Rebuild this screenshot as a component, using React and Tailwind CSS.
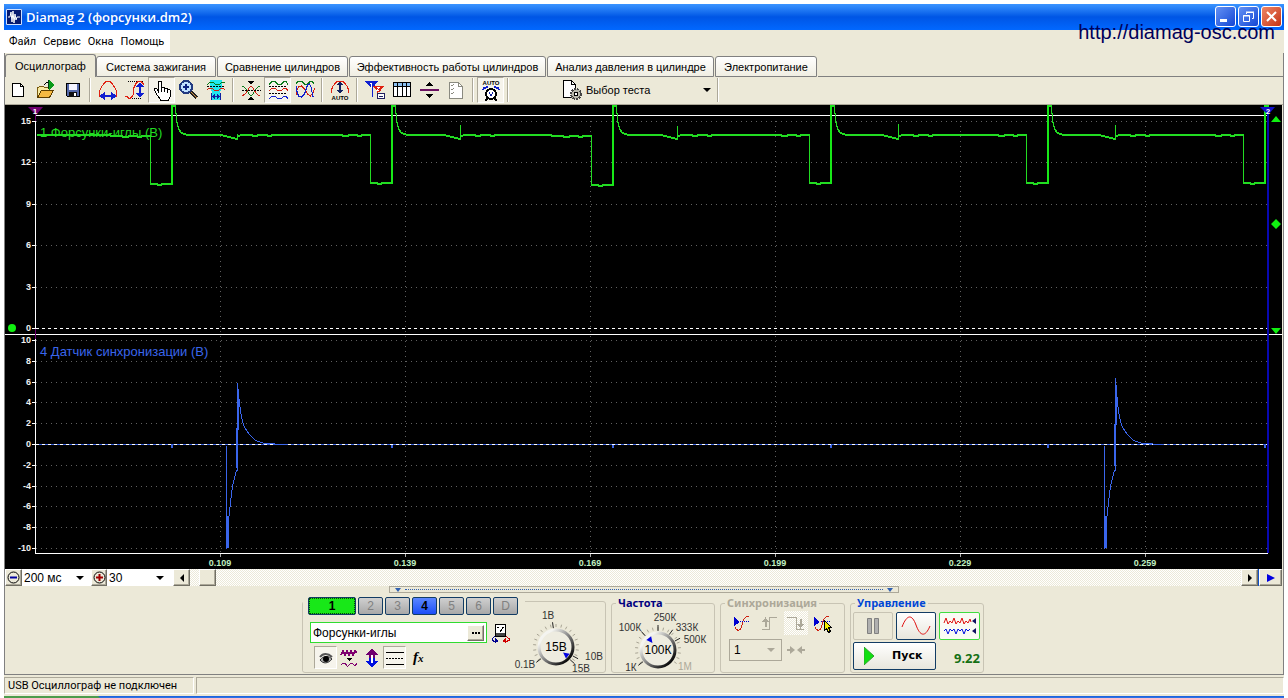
import React, { useState } from 'react';

const TABS = [
  { label: 'Осциллограф', width: 'w-[91px]' },
  { label: 'Система зажигания', width: 'w-[120px]' },
  { label: 'Сравнение цилиндров', width: 'w-[131px]' },
  { label: 'Эффективность работы цилиндров', width: 'w-[197px]' },
  { label: 'Анализ давления в цилиндре', width: 'w-[167px]' },
  { label: 'Электропитание', width: 'w-[102px]' },
];

const MENU = ['Файл', 'Сервис', 'Окна', 'Помощь'];

const CHANNELS = ['2', '3', '4', '5', '6', 'D'];

const PRESSED = 'border border-[#aca899] border-r-white border-b-white bg-[#f6f4ec]';
const RAISED = 'border border-white border-r-[#716f64] border-b-[#716f64] bg-[#ece9d8] shadow-[inset_-1px_-1px_0_#aca899]';
const TRACK = 'bg-[repeating-conic-gradient(#ffffff_0_25%,#ece9d8_0_50%)] bg-[length:2px_2px]';

const Icon = ({ children, size = 24 }) => (
  <svg width={size} height={size} viewBox={`0 0 ${size} ${size}`} fill="none" stroke="#000" strokeWidth="1" shapeRendering="crispEdges" className="shrink-0" aria-hidden="true">
    {children}
  </svg>
);

const Tri = ({ d, fill = '#000' }) => <path d={d} fill={fill} stroke="none" />;

const ICONS = {
  create: (
    <Icon>
      <path d="M5.500 5.500h8l3 3v10h-11z" fill="#fff" />
      <path d="M13.500 5.500v3h3" />
    </Icon>
  ),
  open: (
    <Icon>
      <path d="M3.500 19.500v-10h1l1-1h4l1 1h5v3" fill="#f7e9a0" stroke="#7a5a10" />
      <path d="M3.500 19.500l4-7h12l-4 7z" fill="#f5b942" stroke="#5a3c00" />
      <path d="M10.500 7.500c1-3 2-3 4-3" />
      <Tri d="M15 2l6 5-6 5z" fill="#0a9a1a" />
      <path d="M14.500 2v9" stroke="#003a10" />
    </Icon>
  ),
  save: (
    <Icon>
      <path d="M5.500 5.500h13v13h-12l-1-1z" fill="#5468a8" />
      <path d="M8 6h8v6H8z" fill="#f4f4ff" stroke="none" />
      <path d="M8 14h8v5H8z" fill="#111" stroke="none" />
      <path d="M13 15h2v3h-2z" fill="#fff" stroke="none" />
    </Icon>
  ),
  dome: (
    <Icon>
      <path d="M3.500 19v-6l2-4 3-4 2-2h3l2 2 3 4 2 4v6" stroke="#e02010" />
      <path d="M5 18h14" stroke="#1020d0" strokeWidth="2" />
      <Tri d="M9 14v8l-6-4zM15 14v8l6-4z" fill="#1020d0" />
    </Icon>
  ),
  sCurve: (
    <Icon>
      <path d="M5 3.500h15M5 20.500h13" strokeDasharray="1 1" />
      <path d="M2 18.500h2l2 2h1l3-3 1-8 2-4 2-2h3l3 3" stroke="#e02010" />
      <path d="M17 7v10" stroke="#1020d0" strokeWidth="2" />
      <Tri d="M13 9h8l-4-5zM13 15h8l-4 5z" fill="#1020d0" />
    </Icon>
  ),
  hand: (
    <Icon>
      <path d="M8.500 14.500V4.500c0-2 3-2 3 0v6c0-2 3-2 3 0v1c0-2 3-2 3 0v1c0-2 3-1 3 1v4c0 2-2 3-2 5h-8c0-2-2-3-3-5l-3-5c-1-2 2-3 3-1z" fill="#fff" />
      <path d="M11.500 10v4M14.500 11v3M17.500 12v3" />
    </Icon>
  ),
  magnifier: (
    <Icon>
      <path d="M13 13l7 7" stroke="#222" strokeWidth="4" />
      <path d="M14 14l6 6" stroke="#d09040" strokeWidth="1" />
      <circle cx="9" cy="9" r="6" fill="#bfe0ff" stroke="#223a80" strokeWidth="2" />
      <path d="M6 9h6M9 6v6" stroke="#0a2080" strokeWidth="2" />
    </Icon>
  ),
  window: (
    <Icon>
      <path d="M6 2h12v8l-2 4v8H8v-8l-2-4z" fill="#20e8f0" stroke="none" />
      <path d="M3 6.500l3-2h3l3 2h3l3-2h3" stroke="#0a7a1a" />
      <path d="M3 8.500h18" strokeDasharray="2 1" />
      <path d="M3 11.500l2-1h3l3 2h3l3-2h2l2 1" stroke="#d02010" />
      <path d="M7.500 15v7M16.500 15v7M8 18.500h8" stroke="#1020a0" />
      <Tri d="M11 16v5l-3-2.500zM13 16v5l3-2.500z" fill="#1020a0" />
    </Icon>
  ),
  cross: (
    <Icon>
      <path d="M3 8.500c5 0 6 9 9 9s4-9 9-9" stroke="#0a7a1a" />
      <path d="M3 17.500c5 0 6-9 9-9s4 9 9 9" stroke="#d02010" />
      <path d="M3 12.500h19" strokeDasharray="2 1" />
      <Tri d="M9 3h6l-3 4zM9 22h6l-3-4z" />
    </Icon>
  ),
  waves: (
    <Icon>
      <path d="M3 6.500l3-3h3l3 3h3l3-3h2l2 3" stroke="#0a7a1a" />
      <path d="M3 8.500h18M3 15.500h18" strokeDasharray="2 1" />
      <path d="M3 12.500l3-2h3l3 2h3l3-2h2l2 2" stroke="#d02010" />
      <path d="M3 20.500l3-2h3l3 2h3l3-2h2l2 2" stroke="#1020d0" />
    </Icon>
  ),
  overlap: (
    <Icon>
      <path d="M3 5.500l2-2h4l3 3h2l3-3h2l2 2" stroke="#0a7a1a" />
      <path d="M3.500 17v-4l2-4 3-1 3 3 3 5 3 2 3-4 1-4" stroke="#d02010" />
      <path d="M3.500 8v4l2 6 3 1 3-3 3-9 2-1 2 4 1 8 1 1" stroke="#1020d0" />
    </Icon>
  ),
  auto: (
    <Icon>
      <path d="M3.500 15v-3l1-3 2-3 3-3h5l3 3 2 3 1 3v3" stroke="#e02010" />
      <path d="M12 5v9" stroke="#102060" strokeWidth="2" />
      <Tri d="M9 7h6l-3-4zM9 12h6l-3 4z" fill="#102060" />
      <text x="12" y="22" textAnchor="middle" fill="#000" stroke="none" className="text-[6px] font-bold">AUTO</text>
    </Icon>
  ),
  flags: (
    <Icon>
      <Tri d="M2 3h13l-6 8z" fill="#1020d0" />
      <path d="M9.500 4v15" stroke="#1020d0" />
      <Tri d="M10 8h11l-5 7z" fill="#e02010" />
      <path d="M14.500 9v8" stroke="#e02010" />
      <path d="M7 5.500h1.500v4" stroke="#fff" />
      <path d="M14 9.500h2l-2 3h2" stroke="#fff" />
      <path d="M14.500 15.500h7v5h-7z" fill="#fff" stroke="#202060" />
      <path d="M16 18.500h4" stroke="#202060" />
    </Icon>
  ),
  table: (
    <Icon>
      <path d="M3.500 4.500h17v14h-17z" fill="#fff" />
      <path d="M4 5h16v3H4z" fill="#8cc0f0" stroke="none" />
      <path d="M3 8.500h18M7.500 5v14M12.500 5v14M16.500 5v14" />
    </Icon>
  ),
  split: (
    <Icon>
      <path d="M3 12h19" stroke="#6a1060" strokeWidth="2" />
      <Tri d="M9 8h7l-3.500-4zM9 16h7l-3.500 4z" />
    </Icon>
  ),
  checklist: (
    <Icon>
      <path d="M5.500 4.500h9l4 4v12h-13z" fill="#fff" stroke="#8a8a80" />
      <path d="M14.500 4.500v4h4" stroke="#8a8a80" />
      <path d="M7 7l1 1 2-2M7 11l1 1 2-2M7 15l1 1 2-2" stroke="#8a8a80" />
    </Icon>
  ),
  clock: (
    <Icon>
      <text x="12" y="7" textAnchor="middle" fill="#000" stroke="none" className="text-[6px] font-bold">AUTO</text>
      <circle cx="12" cy="16" r="5" fill="#fff" strokeWidth="2" />
      <path d="M10 14l2 4 2-4" stroke="#1020a0" />
      <path d="M8 21l-2 2M16 21l2 2" strokeWidth="2" />
      <path d="M4 12l1-2 4-1M20 12l-1-2-4-1" stroke="#1020d0" strokeWidth="2" />
    </Icon>
  ),
};

const TOOLBAR = [
  ['create', 'Создать'],
  ['open', 'Открыть'],
  ['save', 'Сохранить'],
  null,
  ['dome', 'Масштаб по времени'],
  ['sCurve', 'Масштаб по амплитуде'],
  ['hand', 'Перемещение', true],
  ['magnifier', 'Увеличить'],
  ['window', 'Окно'],
  null,
  ['cross', 'Центрировать'],
  ['waves', 'Раздельно', true],
  ['overlap', 'Вместе'],
  null,
  ['auto', 'Авто'],
  null,
  ['flags', 'Маркеры'],
  ['table', 'Таблица'],
  ['split', 'Разделить'],
  ['checklist', 'Отчёт'],
  null,
  ['clock', 'Авто частота', true],
  null,
];

const Separator = () => (
  <div className="flex h-6 w-2 shrink-0 justify-center">
    <div className="w-[2px] border-l border-[#aca899] bg-white" />
  </div>
);

const Arrow = ({ className = 'fill-black' }) => (
  <svg width="8" height="4" viewBox="0 0 8 4" className={`pointer-events-none -ml-3 shrink-0 ${className}`} aria-hidden="true">
    <path d="M0 0h8L4 4z" />
  </svg>
);

function TitleBar() {
  const btn = 'flex size-[21px] items-center justify-center rounded-[3px] border border-white';
  return (
    <header className="flex h-[26px] items-center bg-linear-to-b from-[#3a94ff] via-[#0055e5] to-[#0168ff] pr-[2px] pb-px pl-[2px]">
      <svg width="16" height="16" viewBox="0 0 16 16" className="shrink-0 bg-[#061a70]" aria-hidden="true">
        <path d="M0.500 0.500h15v15h-15z" fill="none" stroke="#cfe0ff" />
        <path d="M2 8h2l1-5 1 10 1-11 1 12 1-9 1 6 1-3h3" fill="none" stroke="#fff" />
      </svg>
      <h1 className="ml-1 grow whitespace-nowrap pt-[2px] font-['Open_Sans','Noto_Sans',sans-serif] text-[13px] font-semibold text-white">Diamag 2 (форсунки.dm2)</h1>
      <div className="flex gap-[2px]">
        <button aria-label="Свернуть" className={`${btn} bg-linear-to-br from-[#6490f4] to-[#1444d4]`}>
          <svg width="15" height="15"><path d="M2 10h7v3H2z" fill="#fff" /></svg>
        </button>
        <button aria-label="Восстановить" className={`${btn} bg-linear-to-br from-[#6490f4] to-[#1444d4]`}>
          <svg width="15" height="15" fill="none" stroke="#fff">
            <path d="M5.500 5V3.500h7v6H11M5 3h8" />
            <path d="M2.500 6.500h6v6h-6zM2 7h7" />
          </svg>
        </button>
        <button aria-label="Закрыть" className={`${btn} bg-linear-to-br from-[#ee8464] to-[#c43010]`}>
          <svg width="15" height="15"><path d="M3 3l9 9M12 3l-9 9" stroke="#fff" strokeWidth="2" /></svg>
        </button>
      </div>
    </header>
  );
}

function Tabs() {
  const [active, setActive] = useState(0);
  return (
    <div className="flex h-[23px] items-end" role="tablist">
      {TABS.map((tab, i) => (
        <button
          key={tab.label}
          role="tab"
          aria-selected={i === active}
          onClick={() => setActive(i)}
          className={`${tab.width} shrink-0 whitespace-nowrap rounded-t-[3px] border border-[#808080] text-center text-[11px] leading-[18px] ${
            i === active ? 'h-[23px] border-b-0 bg-[#ece9d8]' : 'mr-[1px] h-[21px] bg-linear-to-b from-white to-[#f0eee2]'
          }`}
        >
          {tab.label}
        </button>
      ))}
      <div className="h-px grow bg-[#808080]" />
    </div>
  );
}

function Toolbar() {
  return (
    <div className="flex h-[28px] items-center border-b border-[#aca899] pb-px">
      {TOOLBAR.map((item, i) => {
        if (!item) return <Separator key={i} />;
        const [key, label, pressed] = item;
        return (
          <button key={key} title={label} aria-label={label} className={`flex h-[26px] w-[27px] shrink-0 items-center justify-center ${pressed ? PRESSED : ''}`}>
            {ICONS[key]}
          </button>
        );
      })}
      <div className="ml-12 flex w-[154px] items-center pr-[3px]">
        <Icon>
          <path d="M3.500 2.500h8l4 4v13h-12z" fill="#fff" />
          <path d="M11.500 2.500v4h4" />
          <circle cx="16" cy="16" r="5" fill="#b8b8ac" stroke="#444" strokeWidth="2" strokeDasharray="2 1" />
          <circle cx="16" cy="16" r="2" fill="#fff" />
        </Icon>
        <select aria-label="Выбор теста" className="min-w-0 grow appearance-none bg-transparent pl-[2px] text-[11px]">
          <option>Выбор теста</option>
        </select>
        <Arrow />
      </div>
      <Separator />
    </div>
  );
}

// falling edge, rising edge, level before the pulse, bottom of the pulse
const PULSES = [
  [150, 172, 135, 183],
  [370, 392, 134, 182],
  [591, 613, 135, 184],
  [809, 831, 134, 182],
  [1026, 1048, 134, 182],
  [1243, 1265, 134, 182],
];

// bumps after each pulse: x and top of the spike
const BUMPS = [
  [237, 133],
  [460, 124],
  [677, 125],
  [898, 123],
  [1115, 124],
];

const injectorPath = () => {
  let d = 'M36 134 H110 V135';
  PULSES.forEach(([fall, rise, level, bottom], i) => {
    d += ` H${fall - 40} V${level} h12 v1 h6 v-1 h9 v1 h4 v-1 H${fall} V${bottom} h7 v1 h4 v-1 H${rise} V105 h3`;
    if (i < BUMPS.length) {
      const [x, top] = BUMPS[i];
      d += ` l1 14 l2 9 l3 4 l6 2 H${x - 16} L${x - 9} 136 L${x} 138 V${top} V136 L${x + 3} 134 h12 v1 h5 v-1 h10 v1 h4 v-1`;
    }
  });
  return d;
};

const syncPath = (x) => `M${x} 445 V548 L${x + 2} 520 L${x + 4} 502 L${x + 6} 486 L${x + 8} 477 L${x + 10} 470`;
const syncDecay = (x, top) =>
  `M${x} 470 V${top} L${x + 2} 403 L${x + 4} 417 L${x + 7} 427 L${x + 12} 434 L${x + 18} 440 L${x + 27} 443 L${x + 48} 444`;

const TOP_TICKS = [[15, 121], [12, 162], [9, 204], [6, 245], [3, 287], [0, 328]];
const BOTTOM_TICKS = [[10, 340], [8, 361], [6, 382], [4, 402], [2, 423], [0, 444], [-2, 465], [-4, 486], [-6, 506], [-8, 527], [-10, 548]];
const TIME_TICKS = [['0.109', 220], ['0.139', 405], ['0.169', 590], ['0.199', 775], ['0.229', 960], ['0.259', 1145]];

function Scope() {
  return (
    <svg viewBox="5 105 1277 464" className="block w-full bg-black" role="img" aria-label="Осциллограмма">
      <g shapeRendering="crispEdges" fill="none">
        <g stroke="#606060" strokeDasharray="1 4">
          {[...TOP_TICKS, ...BOTTOM_TICKS].filter(([v]) => v !== 0).map(([v, y]) => (
            <path key={y} d={`M36 ${y + 0.5}H1267`} />
          ))}
          {TIME_TICKS.map(([t, x]) => (
            <path key={t} d={`M${x + 0.5} 121V553`} />
          ))}
        </g>
        <path d="M35 115.500H1268M5 334.500H1282M35 553.500H1268M35.500 115V554" stroke="#fff" />
        {[...TOP_TICKS, ...BOTTOM_TICKS].map(([, y]) => (
          <path key={y} d={`M32 ${y + 0.5}h4`} stroke="#fff" />
        ))}
        {TIME_TICKS.map(([t, x]) => (
          <path key={t} d={`M${x + 0.5} 554v3`} stroke="#aaa" />
        ))}
        <path d="M36 328.500H1267" stroke="#fff" strokeDasharray="3 3" />
        <path d="M36 444.500H1267" stroke="#fff" strokeDasharray="3 3" />
        <path d="M39 444.500H1267" stroke="#3a62e0" strokeDasharray="3 3" />
        {PULSES.map(([, rise]) => (
          <path key={rise} d={`M${rise} 445v3`} stroke="#3a62e0" strokeWidth="2" />
        ))}
        <path d="M35.500 107v14M35.500 329v10" stroke="#700070" />
        <path d="M1267.500 108V553" stroke="#0808b0" strokeWidth="2" />
        <path d={injectorPath()} stroke="#22dc22" transform="translate(0.5 0.5)" />
        <path d={injectorPath()} stroke="#22dc22" transform="translate(0.5 1.5)" />
        {PULSES.map(([, rise, , bottom]) => (
          <path key={rise} d={`M${rise} 105V${bottom + 2}`} stroke="#18e818" strokeWidth="2" />
        ))}
        <g transform="translate(0.5 0.5)" stroke="#3a66ec">
          {[226, 1104].map((x) => (
            <path key={x} d={syncPath(x)} />
          ))}
          <path d={syncDecay(237, 383)} />
          <path d={syncDecay(1115, 378)} />
        </g>
        <path d="M228 516V548M1106 516V548M238 390V430M237 428V468M1116 385V425M1115 424V466" stroke="#3a66ec" strokeWidth="2" />
      </g>
      <path d="M28 107h15l-7 8z" fill="#700070" />
      <path d="M1260 107h15l-7 8z" fill="#1010c8" />
      <path d="M1271 122h10l-5-6zM1271 328h10l-5 6zM1271 224l5-5 5 5-5 5z" fill="#10f010" />
      <circle cx="12" cy="328" r="4" fill="#10f010" />
      <g fill="#fff" className="text-[8px] font-bold">
        <text x="35" y="114" textAnchor="middle">1</text>
        <text x="1268" y="114" textAnchor="middle">2</text>
      </g>
      <g fill="#f0f0f0" textAnchor="end" className="text-[9px] font-bold">
        {[...TOP_TICKS, ...BOTTOM_TICKS].map(([v, y]) => (
          <text key={y} x="31" y={y + 3}>{v}</text>
        ))}
      </g>
      <g fill="#c0f0c0" textAnchor="middle" className="text-[9px] font-bold">
        {TIME_TICKS.map(([t, x]) => (
          <text key={t} x={x} y="566">{t}</text>
        ))}
      </g>
      <text x="40" y="137" fill="#22dc22" className="text-[13px]">1 Форсунки-иглы (В)</text>
      <text x="40" y="356" fill="#3a66ec" className="text-[13px]">4 Датчик синхронизации (В)</text>
    </svg>
  );
}

function ScrollRow() {
  return (
    <div className={`flex h-[17px] ${TRACK}`}>
      <button aria-label="Уменьшить развёртку" className={`flex w-[17px] items-center justify-center ${RAISED}`}>
        <svg width="13" height="13" fill="none" stroke="#000">
          <circle cx="6.500" cy="6.500" r="5.500" />
          <path d="M3 6.500h7" stroke="#0000a0" strokeWidth="2" />
        </svg>
      </button>
      <div className="flex w-[69px] items-center bg-white pr-[3px]">
        <select aria-label="Развёртка" defaultValue="200 мс" className="w-full appearance-none pl-[2px] text-[12px] leading-4">
          <option>200 мс</option>
        </select>
        <Arrow />
      </div>
      <button aria-label="Увеличить развёртку" className={`flex w-[16px] items-center justify-center ${RAISED}`}>
        <svg width="13" height="13" fill="none" stroke="#000">
          <circle cx="6.500" cy="6.500" r="5.500" />
          <path d="M3 6.500h7M6.500 3v7" stroke="#a00000" strokeWidth="2" />
        </svg>
      </button>
      <div className="flex w-[66px] items-center bg-white pr-[5px]">
        <select aria-label="Масштаб" className="w-full appearance-none pl-[2px] text-[12px] leading-4">
          <option>30</option>
        </select>
        <Arrow />
      </div>
      <button aria-label="Назад" className={`flex w-[17px] items-center justify-center ${RAISED}`}>
        <svg width="4" height="8"><path d="M4 0v8L0 4z" /></svg>
      </button>
      <div className="flex grow pl-[9px]">
        <div className={`w-[17px] ${RAISED}`} />
      </div>
      <button aria-label="Вперёд" className={`flex w-[17px] items-center justify-center ${RAISED}`}>
        <svg width="4" height="8"><path d="M0 0v8l4-4z" /></svg>
      </button>
      <div className="w-px bg-[#1050c8]" />
      <button aria-label="Воспроизвести" className={`flex w-[23px] items-center justify-center ${RAISED}`}>
        <svg width="8" height="8"><path d="M0 0v8l8-4z" fill="#0000e0" /></svg>
      </button>
    </div>
  );
}

const rad = (deg) => (deg * Math.PI) / 180;

// angles run clockwise from the top of the knob
function Dial({ id, value, labels, major, pointer }) {
  const tick = (deg, r1, r2) =>
    `M${r1 * Math.sin(rad(deg))} ${-r1 * Math.cos(rad(deg))}L${r2 * Math.sin(rad(deg))} ${-r2 * Math.cos(rad(deg))}`;
  const minor = Array.from({ length: 19 }, (_, i) => -126 + i * 14);
  return (
    <svg width="98" height="64" viewBox="-46 -39 98 64" className="shrink-0 overflow-visible" role="img" aria-label={value}>
      <defs>
        <linearGradient id={id} x1="0" y1="0" x2="1" y2="1">
          <stop offset="0.2" stopColor="#f4f4f0" />
          <stop offset="0.5" stopColor="#888" />
          <stop offset="0.9" stopColor="#000" />
        </linearGradient>
      </defs>
      <path d={minor.map((a) => tick(a, 20, 23)).join('')} stroke="#a8a494" />
      <path d={major.map((a) => tick(a, 19, 25)).join('')} stroke="#222" />
      <circle r="17" fill="#eeece0" stroke={`url(#${id})`} strokeWidth="3" />
      <path d="M-3 -15h6l-3 6z" fill="#0000e0" transform={`rotate(${pointer})`} />
      <text y="4" textAnchor="middle" className="text-[12px]">{value}</text>
      <g className="text-[10px]" textAnchor="middle">
        {labels.map(([text, x, y, off]) => (
          <text key={text} x={x} y={y} fill={off ? '#aca899' : '#333'}>{text}</text>
        ))}
      </g>
    </svg>
  );
}

function ChannelPanel() {
  const [name, setName] = useState('Форсунки-иглы');
  const btn = 'h-[18px] rounded-[2px] border border-[#123c64] text-[12px] leading-4';
  return (
    <section className="flex h-[72px] w-[304px] rounded-[3px] border border-[#c8c4b4]" aria-label="Канал">
      <div className="-mt-[5px] flex h-[74px] w-[222px] shrink-0 flex-col bg-[#ece9d8] pl-[5px]">
        <div className="flex gap-[2px]">
          <button className={`${btn} w-[48px] bg-[#18e818] font-bold`}>
            <span className="block border border-dotted border-[#064006] leading-[14px]">1</span>
          </button>
          {CHANNELS.map((c) => (
            <button key={c} className={`${btn} w-[25px] ${c === '4' ? 'bg-linear-to-b from-[#5c86ff] to-[#1c4cf8] font-bold text-black' : 'bg-linear-to-b from-[#d0d0d0] to-[#a8a8a8] text-[#808080]'}`}>{c}</button>
          ))}
        </div>
        <div className="mt-[7px] flex items-center gap-1 pl-[2px]">
          <div className="flex h-[21px] w-[177px] items-center border border-[#30dc30] bg-white p-[2px]">
            <input aria-label="Название канала" value={name} onChange={(e) => setName(e.target.value)} className="min-w-0 grow text-[12px] leading-4 outline-none" />
            <button aria-label="Выбрать" className={`flex h-4 w-[17px] items-center justify-center ${RAISED}`}>
              <svg width="8" height="2"><path d="M0 0h2v2H0zM3 0h2v2H3zM6 0h2v2H6z" /></svg>
            </button>
          </div>
          <button aria-label="Сменить датчик">
            <Icon size={20}>
              <path d="M4.500 1.500h10v12h-10z" fill="#fff" />
              <path d="M5 10h9v3H5z" fill="#444" stroke="none" />
              <path d="M9 9l3-4M6 4.500h2M11 4.500h2" />
              <path d="M4 13.500l-3 2v2l3 1" stroke="#000090" />
              <path d="M15 13.500l3 2v2l-3 1" stroke="#d00000" />
              <Tri d="M4 15l4 3-4 2z" fill="#000090" />
              <Tri d="M15 15l-4 3 4 2z" fill="#d00000" />
            </Icon>
          </button>
        </div>
        <div className="mt-[3px] flex items-center pl-[6px]">
          <button aria-label="Видимость" className={`flex size-[23px] items-center justify-center ${PRESSED}`}>
            <svg width="16" height="16" viewBox="0 0 16 16" fill="none">
              <path d="M2 7c3-4 8-4 12 0" stroke="#555" strokeWidth="2" />
              <path d="M2 10c3 4 8 4 12-1-3-3-8-4-12 1z" fill="#aaa" stroke="#333" />
              <circle cx="8" cy="9" r="3" fill="#000" />
            </svg>
          </button>
          <button aria-label="Сглаживание" className="flex size-[23px] items-center justify-center">
            <Icon size={18}>
              <path d="M1 6l2-4 2 4 2-4 2 4 2-4 2 4 2-4 2 2" stroke="#800070" strokeWidth="2" />
              <Tri d="M6 9h6l-3 3z" />
              <path d="M1 16l2-2h2l2 3h1l3-3h1l3 3 2-3" stroke="#800070" />
            </Icon>
          </button>
          <button aria-label="Инвертировать" className="flex size-[23px] items-center justify-center">
            <Icon size={18}>
              <path d="M9 0l7 6h-4v3H6V6H2z" fill="#700070" stroke="none" />
              <path d="M9 18l7-6h-4V9H6v3H2z" fill="#0010e0" stroke="none" />
              <path d="M9 6v8" stroke="#fff" strokeWidth="2" />
            </Icon>
          </button>
          <button aria-label="Линии" className={`flex size-[23px] items-center justify-center ${PRESSED}`}>
            <Icon size={20}>
              <path d="M1 4.500h18M1 16.500h18" />
              <path d="M1 10.500h18" strokeDasharray="2 1" />
            </Icon>
          </button>
          <button aria-label="Функция" className="h-[23px] pl-[7px] font-['Liberation_Serif',serif] text-[15px] font-bold italic leading-5">
            f<span className="text-[11px]">x</span>
          </button>
        </div>
      </div>
      <div className="-ml-[15px] flex items-end">
        <Dial id="knob-volts" value="15В" pointer={128} major={[-128, -8, 118, 132]} labels={[['1В', -8, -28], ['0.1В', -31, 21], ['15В', 25, 25], ['10В', 38, 13]]} />
      </div>
    </section>
  );
}

function Group({ title, titleClass, className, children }) {
  return (
    <fieldset className={`h-[78px] rounded-[3px] border border-[#c8c4b4] ${className}`}>
      <legend className={`ml-1 px-[2px] font-['Noto_Sans','Open_Sans',sans-serif] text-[11px] font-bold leading-4 ${titleClass}`}>{title}</legend>
      {children}
    </fieldset>
  );
}

function SyncPanel() {
  const btn = 'flex size-[24px] items-center justify-center';
  return (
    <Group title="Синхронизация" titleClass="text-[#aca899]" className="w-[125px]">
      <div className="flex gap-[3px] pl-[9px]">
        <button aria-label="Уровень" className={btn}>
          <Icon size={20}>
            <path d="M3 14c2 5 6 4 7-2s3-9 7-9" stroke="#d02010" />
            <path d="M8 8.500h10" stroke="#0000d0" strokeDasharray="1 1" />
            <Tri d="M2 4v9l6-4z" fill="#0000d0" />
          </Icon>
        </button>
        <button aria-label="По фронту" className={btn}>
          <Icon size={20}>
            <path d="M3 16.500h7v-12h8" stroke="#aca899" />
            <path d="M6.500 7v7M4 9l2.500-3 2.500 3" stroke="#aca899" strokeWidth="2" />
          </Icon>
        </button>
        <button aria-label="По спаду" className={`${btn} ${TRACK}`}>
          <Icon size={20}>
            <path d="M1 4.500h9v12h8" stroke="#aca899" />
            <path d="M14.500 6v7M12 11l2.500 3 2.500-3" stroke="#aca899" strokeWidth="2" />
          </Icon>
        </button>
        <button aria-label="Выбрать уровень" className={btn}>
          <Icon size={20}>
            <path d="M2 14c2 5 6 4 7-2s3-9 7-9" stroke="#d02010" />
            <path d="M8 8.500h9" stroke="#0000d0" strokeDasharray="1 1" />
            <Tri d="M1 4v9l6-4z" fill="#0000d0" />
            <path d="M11.500 7.500v10l2-2 2 4 2-1-2-4h3z" fill="#f8f000" />
          </Icon>
        </button>
      </div>
      <div className="mt-[4px] flex items-center gap-[5px] pl-[8px]">
        <div className="flex h-[22px] w-[53px] items-center border border-[#aca899] pr-[2px]">
          <select aria-label="Канал синхронизации" className="w-full appearance-none bg-transparent pl-1 text-[12px]">
            <option>1</option>
          </select>
          <Arrow className="fill-[#aca899]" />
        </div>
        <svg width="18" height="10" fill="#aca899" aria-hidden="true">
          <path d="M0 4h3V1l5 4-5 4V6H0zM18 4h-3V1l-5 4 5 4V6h3z" />
        </svg>
      </div>
    </Group>
  );
}

function ControlPanel() {
  return (
    <Group title="Управление" titleClass="text-[#0046d5]" className="w-[134px]">
      <div className="mt-px flex gap-[3px] pl-[2px]">
        <button aria-label="Пауза" className="flex h-[28px] w-[40px] items-center justify-center rounded-[2px] border border-[#c8c4b4]">
          <svg width="12" height="16" fill="#b0b0b0" stroke="#808080"><path d="M0.500 0.500h4v15h-4zM7.500 0.500h4v15h-4z" /></svg>
        </button>
        <button aria-label="Осциллограмма" className="flex h-[28px] w-[40px] items-center justify-center rounded-[2px] border border-[#123c64] bg-linear-to-b from-white to-[#e8e6dc]">
          <svg width="30" height="20" fill="none" stroke="#e01010"><path d="M1 11C6-2 11-2 15 9s9 13 14 1" /></svg>
        </button>
        <button aria-label="Самописец" className="flex h-[28px] w-[41px] items-center justify-center rounded-[2px] border border-[#40dc40] bg-[#fafaf4]">
          <svg width="34" height="20" fill="none">
            <path d="M1 7l2-5 2 6 2-3 2 2 2-5 2 6 2-3 2 2 2-5 2 6 2-3 2 2 2-4 1 3" stroke="#e01010" />
            <path d="M1 15l2-2 2 5 2-5 2 2 2-2 2 5 2-5 2 2 2-2 2 5 2-5 2 2 2-2" stroke="#0010e0" />
            <path d="M33 2v6l-4-3zM33 12v6l-4-3z" fill="#101060" />
          </svg>
        </button>
      </div>
      <div className="mt-[2px] flex items-center pl-[2px]">
        <button className="flex h-[28px] w-[83px] items-center rounded-[2px] border border-[#123c64] bg-linear-to-b from-white to-[#e8e6dc] pl-[10px] font-['DejaVu_Sans',sans-serif] text-[11px] font-bold">
          <svg width="10" height="18" className="mr-[18px]"><path d="M0 0v18l10-9z" fill="#10e010" stroke="#30a030" /></svg>
          Пуск
        </button>
        <output className="grow pt-1 pr-[3px] text-right font-['Noto_Sans',sans-serif] text-[13px] font-bold leading-4 text-[#147014]">9.22</output>
      </div>
    </Group>
  );
}

export default function App() {
  return (
    <div className="relative bg-white px-1 pt-1 font-['Liberation_Sans',Arial,sans-serif] text-black">
      <TitleBar />
      <a href="http://diamag-osc.com" className="absolute top-[20px] right-[13px] text-[20px] leading-6 text-[#00005a]">http://diamag-osc.com</a>
      <div className="bg-[#ece9d8]">
        <nav className="flex h-[23px] w-[166px] items-center gap-[7px] bg-white pt-[2px] pl-[5px] font-['Roboto','Noto_Sans',sans-serif] text-[11px]">
          {MENU.map((item) => (
            <button key={item} className="whitespace-nowrap">{item}</button>
          ))}
        </nav>
        <main className="border-r border-b border-l border-[#808080] pt-px">
          <Tabs />
          <Toolbar />
          <div className="pr-px">
            <Scope />
            <ScrollRow />
          </div>
          <div className="mx-auto flex h-[7px] w-[510px] items-center justify-between border border-[#aca899] px-[5px]">
            <svg width="6" height="4"><path d="M0 0h6L3 4z" fill="#3060b0" /></svg>
            <div className="mx-1 grow border-t border-dotted border-[#3060b0]" />
            <svg width="6" height="4"><path d="M0 0h6L3 4z" fill="#3060b0" /></svg>
          </div>
          <div className="flex items-end justify-center gap-[5px] pt-[2px] pr-[2px] pb-px">
            <ChannelPanel />
            <Group title="Частота" titleClass="text-[#000080]" className="w-[104px]">
              <Dial
                id="knob-rate"
                value="100К"
                pointer={-38}
                major={[-128, -42, 0, 36, 62]}
                labels={[['1К', -27, 21], ['100К', -28, -19], ['250К', 7, -29], ['333К', 29, -19], ['500К', 37, -7], ['1М', 27, 20, true]]}
              />
            </Group>
            <SyncPanel />
            <ControlPanel />
          </div>
        </main>
        <footer className="flex gap-[2px] py-[2px] font-['Roboto','Noto_Sans',sans-serif] text-[11px] leading-[15px]">
          <div className="w-[190px] border border-[#aca899] border-r-white border-b-white pl-[3px] whitespace-nowrap">USB Осциллограф не подключен</div>
          <div className="grow border border-[#aca899] border-r-white border-b-white" />
        </footer>
      </div>
      <div className="flex h-[4px] bg-linear-to-b from-[#1c5cd8] to-[#4a94f8]">
        <div className="w-[96px] rounded-tr-[3px] bg-[#4c9c4c]" />
      </div>
    </div>
  );
}
